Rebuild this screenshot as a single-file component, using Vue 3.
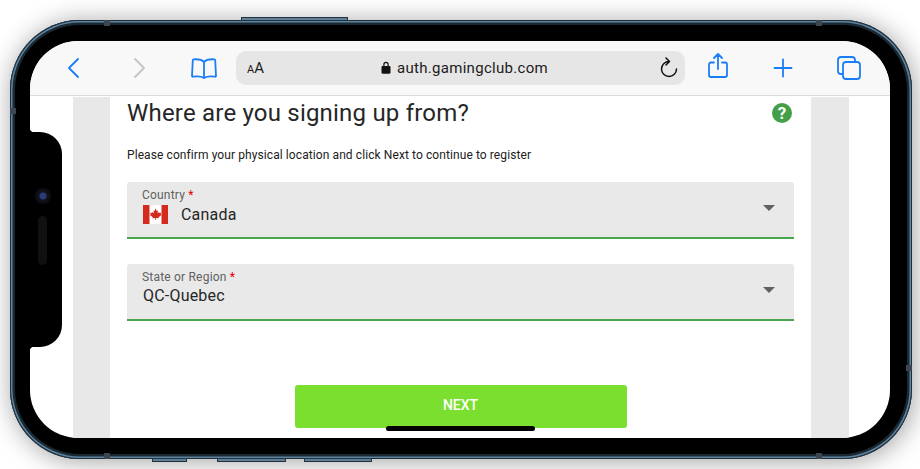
<script setup>
  // 入力欄のデータ
  const fields = [
    { label: 'Country', value: 'Canada', flag: true },
    { label: 'State or Region', value: 'QC-Quebec', flag: false },
  ];
  // 本体フレームのアンテナライン
  const bands = ['t1', 't2', 'b1', 'b2', 'l1', 'r1'];
</script>

<template>
  <div class="stage">
    <div class="phone">
      <!-- 本体の側面ボタン -->
      <i class="btn btn-top"></i>
      <i class="btn btn-b1"></i>
      <i class="btn btn-b2"></i>
      <i class="btn btn-b3"></i>
      <i v-for="b in bands" :key="b" class="band" :class="b"></i>

      <div class="screen">
        <!-- Safari ツールバー -->
        <header class="toolbar">
          <svg class="ico back" width="16" height="22" viewBox="0 0 16 22"><path d="M12 2 3 11l9 9" /></svg>
          <svg class="ico forward" width="16" height="22" viewBox="0 0 16 22"><path d="m4 2 9 9-9 9" /></svg>
          <svg class="ico book" width="26" height="22" viewBox="0 0 26 22">
            <path d="M13 5C11 2.600 7 2 2.500 2.300 2 2.300 1.800 2.600 1.800 3L1 19c0 .6.3.8.8.7 4.200-.6 8.700-.4 11.200 1.300 2.500-1.700 7-1.900 11.200-1.300.5.100.8-.1.8-.7L24.200 3c0-.4-.2-.7-.7-.7C19 2 15 2.600 13 5Zm0 0v15.500" />
          </svg>
          <div class="address">
            <span class="aa"><small>A</small>A</span>
            <span class="url">
              <svg width="10" height="13" viewBox="0 0 10 13"><path class="lock" d="M2.300 5V3.500a2.700 2.700 0 0 1 5.400 0V5h.6c.7 0 1.200.5 1.200 1.200v5.300c0 .7-.5 1.200-1.200 1.200H1.700c-.7 0-1.200-.5-1.200-1.200V6.200C.5 5.500 1 5 1.700 5h.6Zm1.200 0h3V3.500a1.500 1.500 0 0 0-3 0V5Z" /></svg>
              auth.gamingclub.com
            </span>
            <svg class="reload" width="18" height="21" viewBox="0 0 18 21"><path d="M9 4.500A7.500 7.500 0 1 0 16.500 12M6 1l3.500 3.500L6 8" /></svg>
          </div>
          <svg class="ico share" width="20" height="25" viewBox="0 0 20 25"><path d="M6 9.500H3c-1.300 0-2 .7-2 2V22c0 1.300.7 2 2 2h14c1.300 0 2-.7 2-2V11.500c0-1.300-.7-2-2-2h-3M10 16V1.500M6 5l4-4 4 4" /></svg>
          <svg class="ico plus" width="20" height="20" viewBox="0 0 20 20"><path d="M10 1.500v17M1.500 10h17" /></svg>
          <svg class="ico tabs" width="24" height="24" viewBox="0 0 24 24">
            <path d="M5.500 18H4c-1.800 0-3-1-3-3V4c0-2 1.200-3 3-3h11c1.800 0 3 1 3 3v1.500" />
            <rect x="6" y="6" width="17" height="17" rx="3" />
          </svg>
        </header>

        <!-- ページ本体 -->
        <main class="page">
          <div class="card">
            <div class="title-row">
              <h1>Where are you signing up from?</h1>
              <span class="help">?</span>
            </div>
            <p class="intro">Please confirm your physical location and click Next to continue to register</p>

            <div v-for="f in fields" :key="f.label" class="field">
              <span class="label">{{ f.label }} <b>*</b></span>
              <span class="value" :class="{ 'has-flag': f.flag }">
                <svg v-if="f.flag" class="flag" width="25" height="19" viewBox="0 0 25 19">
                  <rect width="25" height="19" fill="#fff" />
                  <rect width="6.500" height="19" fill="#d52b1e" />
                  <rect x="18.500" width="6.500" height="19" fill="#d52b1e" />
                  <path fill="#d52b1e" d="m12.500 3.500 1.300 2.400 1.200-.6-.5 3 1.500-1.300.4 1 1.900-.3-.6 1.900.8.400-2.900 2.300.3 1-2.800-.4V15h-.8v-2.100l-2.800.4.300-1-2.900-2.300.8-.4-.6-1.900 1.900.3.4-1L11 8.300l-.5-3 1.200.6Z" />
                </svg>
                {{ f.value }}
              </span>
              <i class="caret"></i>
            </div>

            <button class="next">NEXT</button>
          </div>
        </main>
        <i class="home"></i>
      </div>

      <!-- ノッチ -->
      <div class="notch">
        <i class="camera"></i>
        <i class="speaker"></i>
      </div>
    </div>
  </div>
</template>

<style>
html, body {
  margin: 0;
  background: #fff;
  overflow: hidden;
}
</style>

<style scoped>
.stage {
  width: 920px;
  height: 469px;
  box-sizing: border-box;
  padding: 20px 8px 10px 10px;
  font-family: Roboto, "Liberation Sans", sans-serif;
  overflow: hidden;
}

.phone {
  position: relative;
  box-sizing: border-box;
  height: 439px;
  padding: 21px 22px 21px 20px;
  background: #000;
  border-radius: 70px;
  box-shadow:
    inset 0 0 0 1px #1e2d3a,
    inset 0 0 0 2.500px #5f84a0,
    inset 0 0 0 5px #1a2832,
    2px 2px 26px rgba(0, 0, 0, .38);
}

.btn {
  position: absolute;
  background: #5d7f97;
  border: 1px solid #22323e;
  box-sizing: border-box;
}
.btn-top { left: 231px; top: -3px; width: 107px; height: 4px; }
.btn-b1 { left: 142px; bottom: -3px; width: 35px; height: 4px; }
.btn-b2 { left: 207px; bottom: -3px; width: 69px; height: 4px; }
.btn-b3 { left: 294px; bottom: -3px; width: 68px; height: 4px; }

.band {
  position: absolute;
  background: #3c4650;
}
.t1 { left: 94px; top: 0; width: 6px; height: 6px; }
.t2 { left: 806px; top: 0; width: 6px; height: 6px; }
.b1 { left: 94px; bottom: 0; width: 6px; height: 6px; }
.b2 { left: 806px; bottom: 0; width: 6px; height: 6px; }
.l1 { left: 0; top: 88px; width: 6px; height: 6px; }
.r1 { right: 0; top: 345px; width: 6px; height: 6px; }

.screen {
  position: relative;
  height: 397px;
  display: flex;
  flex-direction: column;
  background: #fff;
  border-radius: 48px;
  overflow: hidden;
}

.toolbar {
  flex: none;
  box-sizing: border-box;
  height: 55px;
  display: flex;
  align-items: center;
  padding: 0 0 1px 36px;
  background: #f8f8f8;
  border-bottom: 1px solid #dcdcdc;
}

.ico {
  flex: none;
  fill: none;
  stroke: #1a7df5;
  stroke-width: 1.8;
  stroke-linecap: round;
  stroke-linejoin: round;
}
.forward { margin-left: 49px; stroke: #c4c4c4; }
.book { margin-left: 44px; }
.share { margin-left: 23px; margin-top: -4px; }
.plus { margin-left: 45px; }
.tabs { margin-left: 44px; }

.address {
  flex: none;
  width: 449px;
  height: 34px;
  margin-left: 19px;
  box-sizing: border-box;
  padding: 0 7px 0 11px;
  display: flex;
  align-items: center;
  justify-content: space-between;
  background: #e6e6e6;
  border-radius: 10px;
  color: #1c1c1c;
}
.aa { font-size: 15px; width: 18px; }
.aa small { font-size: 11px; }
.url {
  display: flex;
  align-items: center;
  gap: 6px;
  margin-left: 4px;
  font-size: 15px;
  letter-spacing: .3px;
}
.lock { fill: #111; fill-rule: evenodd; }
.reload {
  fill: none;
  stroke: #111;
  stroke-width: 1.5;
  stroke-linecap: round;
  stroke-linejoin: round;
}

.page {
  flex: 1;
  margin: 1px 41px 0 43px;
  padding: 0 38px 0 37px;
  background: #e8e8e8;
  min-height: 0;
}

.card {
  box-sizing: border-box;
  height: 100%;
  padding: 0 17px;
  background: #fff;
}

.title-row {
  display: flex;
  align-items: center;
  justify-content: space-between;
  height: 32px;
}
h1 {
  margin: 0;
  font-size: 24px;
  font-weight: 400;
  letter-spacing: .2px;
  color: #262626;
}
.help {
  width: 20px;
  height: 20px;
  margin-right: 2px;
  border-radius: 50%;
  background: #43a047;
  color: #fff;
  font: 700 17px/20px Roboto, sans-serif;
  text-align: center;
}

.intro {
  margin: 19px 0 20px;
  font-size: 12px;
  line-height: 14px;
  letter-spacing: .09px;
  color: #212121;
}

.field {
  position: relative;
  box-sizing: border-box;
  height: 57px;
  margin-bottom: 25px;
  padding: 6px 16px 0 15px;
  display: flex;
  flex-direction: column;
  background: #e9e9e9;
  border-bottom: 2px solid #4aa64e;
  border-radius: 3px 3px 0 0;
}
.label {
  font-size: 12px;
  line-height: 14px;
  letter-spacing: .2px;
  color: #616161;
}
.label b {
  color: #e00000;
  font-weight: 400;
}
.value {
  display: flex;
  align-items: center;
  gap: 13px;
  height: 22px;
  margin-left: 1px;
  font-size: 16px;
  letter-spacing: .2px;
  color: #262626;
}
.has-flag { margin-top: 1px; }
.flag { flex: none; }
.caret {
  position: absolute;
  right: 19px;
  top: 23px;
  border: 6px solid transparent;
  border-top: 6px solid #616161;
  border-bottom: 0;
}

.next {
  display: block;
  width: 332px;
  height: 43px;
  margin: 64px auto 0;
  padding: 0 0 4px;
  border: 0;
  border-radius: 3px;
  background: #7bdf2f;
  color: #fff;
  font: 500 14px Roboto, sans-serif;
}

.home {
  position: absolute;
  left: 356px;
  bottom: 7px;
  width: 149px;
  height: 5px;
  border-radius: 3px;
  background: #000;
}

.notch {
  position: absolute;
  left: 20px;
  top: 112px;
  width: 32px;
  height: 215px;
  background: #000;
  border-radius: 0 22px 22px 0;
}
/* ノッチ付け根の小さな丸み */
.notch::before,
.notch::after {
  content: "";
  position: absolute;
  left: 0;
  width: 4px;
  height: 4px;
}
.notch::before {
  top: -4px;
  background: radial-gradient(circle at 100% 0, transparent 4px, #000 4.500px);
}
.notch::after {
  bottom: -4px;
  background: radial-gradient(circle at 100% 100%, transparent 4px, #000 4.500px);
}
.camera {
  position: absolute;
  left: 5px;
  top: 56px;
  width: 16px;
  height: 16px;
  border-radius: 50%;
  background: radial-gradient(circle, #2c3a78 0 3px, #10131c 4px, #0c0c0e 8px);
}
.speaker {
  position: absolute;
  left: 8px;
  top: 84px;
  width: 9px;
  height: 49px;
  border-radius: 5px;
  background: #101010;
}
</style>
